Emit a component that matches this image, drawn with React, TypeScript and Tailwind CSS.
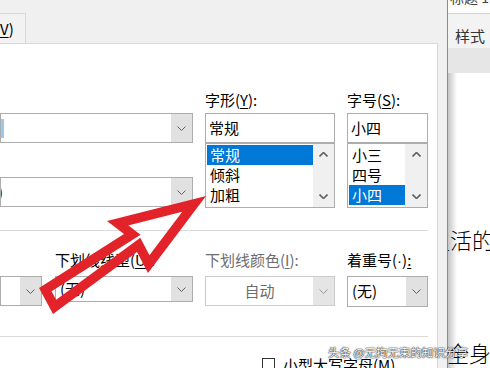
import React from "react";

function Chev({ up = false, color = "#606060", bold = false }: { up?: boolean; color?: string; bold?: boolean }) {
  return (
    <svg width="9" height="5" viewBox="0 0 9 5">
      <polyline
        points={up ? "0.5,4.5 4.5,0.5 8.5,4.5" : "0.5,0.5 4.5,4.5 8.5,0.5"}
        fill="none"
        stroke={color}
        strokeWidth={bold ? 1.6 : 1}
      />
    </svg>
  );
}

function Combo({
  className,
  children,
  disabled = false,
}: {
  className: string;
  children?: React.ReactNode;
  disabled?: boolean;
}) {
  return (
    <div
      className={
        "flex bg-white border " +
        (disabled ? "border-[#cccccc] " : "border-[#adadad] ") +
        className
      }
    >
      <div className="flex-1 flex items-center overflow-hidden whitespace-nowrap">{children}</div>
      <div
        className={
          "w-[21px] flex items-center justify-center " +
          (disabled ? "bg-[#e5e5e5]" : "bg-[#e1e1e1]")
        }
      >
        <Chev color={disabled ? "#9a9a9a" : "#606060"} />
      </div>
    </div>
  );
}

function ListBox({
  items,
  sel,
  scrollW,
}: {
  items: string[];
  sel: number;
  scrollW: string;
}) {
  return (
    <div className="h-[65px] border border-[#adadad] bg-white flex pl-[1px] pt-[1px]">
      <div className="flex-1 flex flex-col">
        {items.map((t, i) => (
          <div
            key={t}
            className={
              "h-[20px] leading-[20px] px-[3px] " +
              (i === sel ? "bg-[#0078d7] text-white" : "text-black")
            }
          >
            {t}
          </div>
        ))}
      </div>
      <div className={scrollW + " -mt-[1px] bg-[#f0f0f0] flex flex-col items-center justify-between py-[8px]"}>
        <Chev up bold color="#606060" />
        <Chev bold color="#606060" />
      </div>
    </div>
  );
}

const ARROW = "206,196 107,221 124,234 39,288 53,314 137,252 148,273";

export default function App() {
  return (
    <div className="relative flex w-[490px] h-[368px] overflow-hidden bg-white font-['Noto_Sans_CJK_SC',sans-serif] text-[15px] text-black">
      {/* Dialog */}
      <div className="flex flex-col w-[448px] h-full bg-[#f0f0f0] border-r border-[#8c8c8c] overflow-hidden">
        <div className="h-[43px] shrink-0 flex items-end">
          <div className="h-[30px] w-[26px] border-t border-r border-[#d9d9d9] bg-[#f2f2f2] flex items-center leading-none">
            <span className="underline underline-offset-2">V</span>
            <span>)</span>
          </div>
        </div>
        <div className="flex-1 shrink-0 mr-[9px] bg-white border-t border-r border-[#d9d9d9] flex flex-col">
          {/* top section */}
          <div className="flex items-start pt-[46px]">
            <div className="w-[193px] pt-[23px] flex flex-col">
              <Combo className="h-[30px]">
                <span className="w-[3px] h-[19px] bg-[#9cc8ee]" />
              </Combo>
              <Combo className="h-[30px] mt-[34px]">
                <span className="-ml-[3px]">)</span>
              </Combo>
            </div>
            <div className="w-[130px] ml-[12px] flex flex-col">
              <div className="h-[20px] leading-[20px]">
                字形(<span className="underline underline-offset-2">Y</span>):
              </div>
              <div className="mt-[3px] h-[30px] border border-[#adadad] flex items-center px-[3px]">常规</div>
              <ListBox items={["常规", "倾斜", "加粗"]} sel={0} scrollW="w-[21px]" />
            </div>
            <div className="w-[81px] ml-[12px] flex flex-col">
              <div className="h-[20px] leading-[20px]">
                字号(<span className="underline underline-offset-2">S</span>):
              </div>
              <div className="mt-[3px] h-[30px] border border-[#adadad] flex items-center px-[3px]">小四</div>
              <ListBox items={["小三", "四号", "小四"]} sel={2} scrollW="w-[22px]" />
            </div>
          </div>
          <div className="mt-[22px] h-px w-[428px] bg-[#dadada]" />
          {/* bottom section */}
          <div className="flex items-start mt-[19px]">
            <div className="w-[42px] pt-[26px]">
              <Combo className="h-[30px] w-[42px]" />
            </div>
            <div className="w-[138px] ml-[13px] flex flex-col">
              <div className="h-[20px] leading-[20px] whitespace-nowrap">
                下划线线型(<span className="underline underline-offset-2">U</span>):
              </div>
              <Combo className="h-[26px] mt-[6px]">
                <span className="pl-[4px]">(无)</span>
              </Combo>
            </div>
            <div className="w-[130px] ml-[12px] flex flex-col">
              <div className="h-[20px] leading-[20px] whitespace-nowrap text-[#6d6d6d]">
                下划线颜色(<span className="underline underline-offset-2">I</span>):
              </div>
              <Combo className="h-[30px] mt-[6px]" disabled>
                <span className="w-full text-center text-[#6d6d6d]">自动</span>
              </Combo>
            </div>
            <div className="w-[81px] ml-[12px] flex flex-col">
              <div className="h-[20px] leading-[20px] whitespace-nowrap">
                着重号(<span className="font-['Liberation_Sans',sans-serif]">·</span>)<span className="underline underline-offset-2">:</span>
              </div>
              <Combo className="h-[31px] mt-[6px]">
                <span className="pl-[4px]">(无)</span>
              </Combo>
            </div>
          </div>
          <div className="mt-[29px] h-px w-[428px] bg-[#dadada]" />
          <div className="mt-[21px] flex items-start pl-[262px]">
            <div className="w-[13px] h-[13px] border border-[#333333] bg-white shrink-0" />
            <div className="ml-[8px] -mt-[3px] leading-[20px] whitespace-nowrap">
              小型大写字母(<span className="underline underline-offset-2">M</span>)
            </div>
          </div>
        </div>
      </div>

      {/* Document */}
      <div className="flex-1 flex flex-col overflow-hidden">
        <div className="h-[14px] shrink-0 bg-white border-b border-[#d5d5d5] overflow-hidden">
          <div className="-mt-[11px] pl-[2px] text-[14px] leading-[16px] text-[#444] whitespace-nowrap">标题 1</div>
        </div>
        <div className="h-[34px] shrink-0 bg-[#f3f3f3] pl-[7px] pt-[14px] text-[15px] leading-[16px] text-[#333]">样式</div>
        <div className="h-[25px] shrink-0 bg-[#e6e6e6]" />
        <div className="flex-1 bg-[linear-gradient(90deg,#c4c4c4_0px,#ffffff_9px)] flex flex-col overflow-hidden">
          <div className="mt-[154px] -ml-[20px] text-[22px] leading-[24px] whitespace-nowrap font-light">
            生活的
          </div>
          <div className="mt-[89px] -ml-[1px] text-[22px] leading-[24px] whitespace-nowrap font-light">全身</div>
        </div>
      </div>

      {/* Red arrow overlay */}
      <svg className="absolute left-0 top-0 pointer-events-none" width="490" height="368" viewBox="0 0 490 368">
        <defs>
          <clipPath id="arrowClip">
            <polygon points={ARROW} />
          </clipPath>
        </defs>
        <polygon
          points={ARROW}
          fill="none"
          stroke="#e2232a"
          strokeWidth="19"
          strokeLinejoin="miter"
          strokeMiterlimit="10"
          clipPath="url(#arrowClip)"
        />
      </svg>

      {/* Watermark */}
      <div className="absolute left-[328px] top-[345px] text-[11.5px] leading-[14px] text-white whitespace-nowrap [text-shadow:0_0_1px_#222,0_0_1px_#222,0_0_2px_#666]">
        头条 @无拘无束的知识分享
      </div>
    </div>
  );
}
